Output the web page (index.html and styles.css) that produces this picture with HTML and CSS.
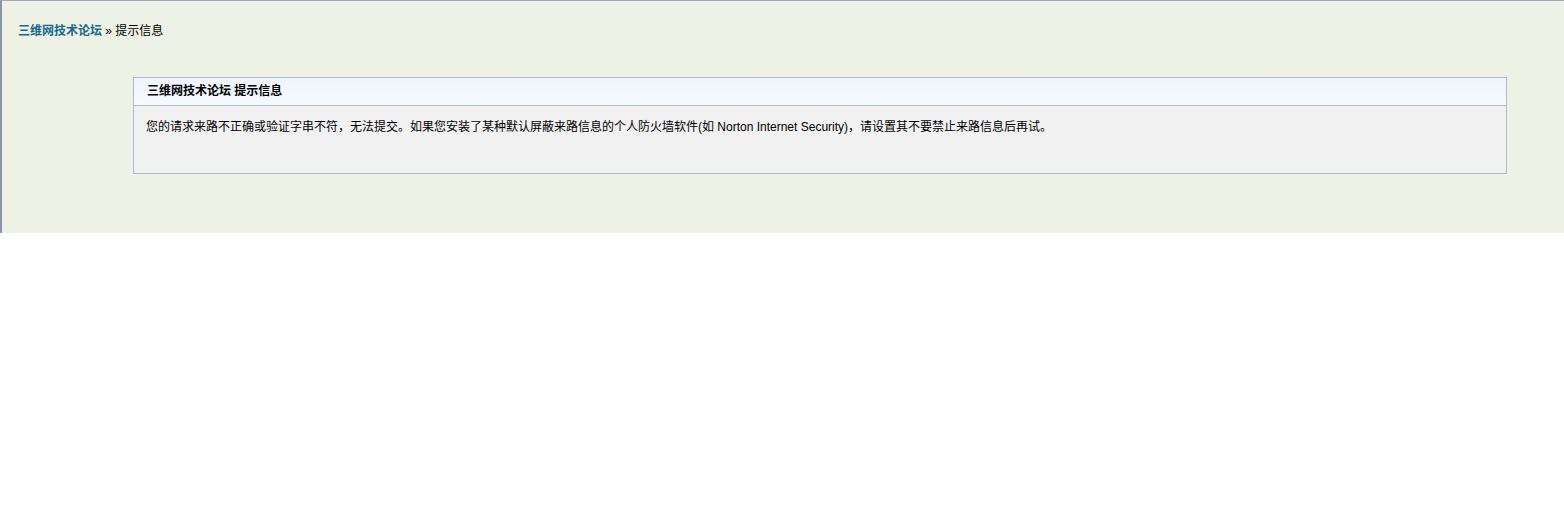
FILE: index.html
```html
<!DOCTYPE html>
<html lang="zh-CN">
<head>
<meta charset="utf-8">
<title>三维网技术论坛 提示信息</title>
<link rel="stylesheet" href="styles.css">
</head>
<body>
<div class="wrap">
  <div class="crumb"><a class="home" href="#">三维网技术论坛</a> &raquo; 提示信息</div>
  <div class="box">
    <div class="box-head">三维网技术论坛 提示信息</div>
    <div class="box-body">您的请求来路不正确或验证字串不符，无法提交。如果您安装了某种默认屏蔽来路信息的个人防火墙软件(如 Norton Internet Security)，请设置其不要禁止来路信息后再试。</div>
  </div>
</div>
</body>
</html>
```
FILE: styles.css
```css
html, body {
  margin: 0;
  padding: 0;
  background: #ffffff;
}
body {
  font-family: "Liberation Sans", Arial, "Noto Sans CJK SC", sans-serif;
  font-size: 12px;
  color: #000;
}
.wrap {
  box-sizing: border-box;
  height: 233px;
  border-top: 1px solid #a3abb5;
  border-left: 2px solid #8896aa;
  background: #eef1e6;
  padding: 21px 57px 0 16px;
}
.crumb {
  line-height: 18px;
  height: 18px;
}
.home {
  color: #16698c;
  font-weight: bold;
  text-decoration: none;
}
.box {
  margin: 37px 0 0 115px;
  border: 1px solid #aebccc;
  background: #f1f1f1;
}
.box-head {
  height: 27px;
  line-height: 27px;
  padding-left: 13px;
  font-weight: bold;
  background: linear-gradient(#eef4fc, #f7faff);
  border-bottom: 1px solid #aebccc;
}
.box-body {
  height: 67px;
  box-sizing: border-box;
  padding: 12px 12px 0 12px;
  line-height: 18px;
}
```
